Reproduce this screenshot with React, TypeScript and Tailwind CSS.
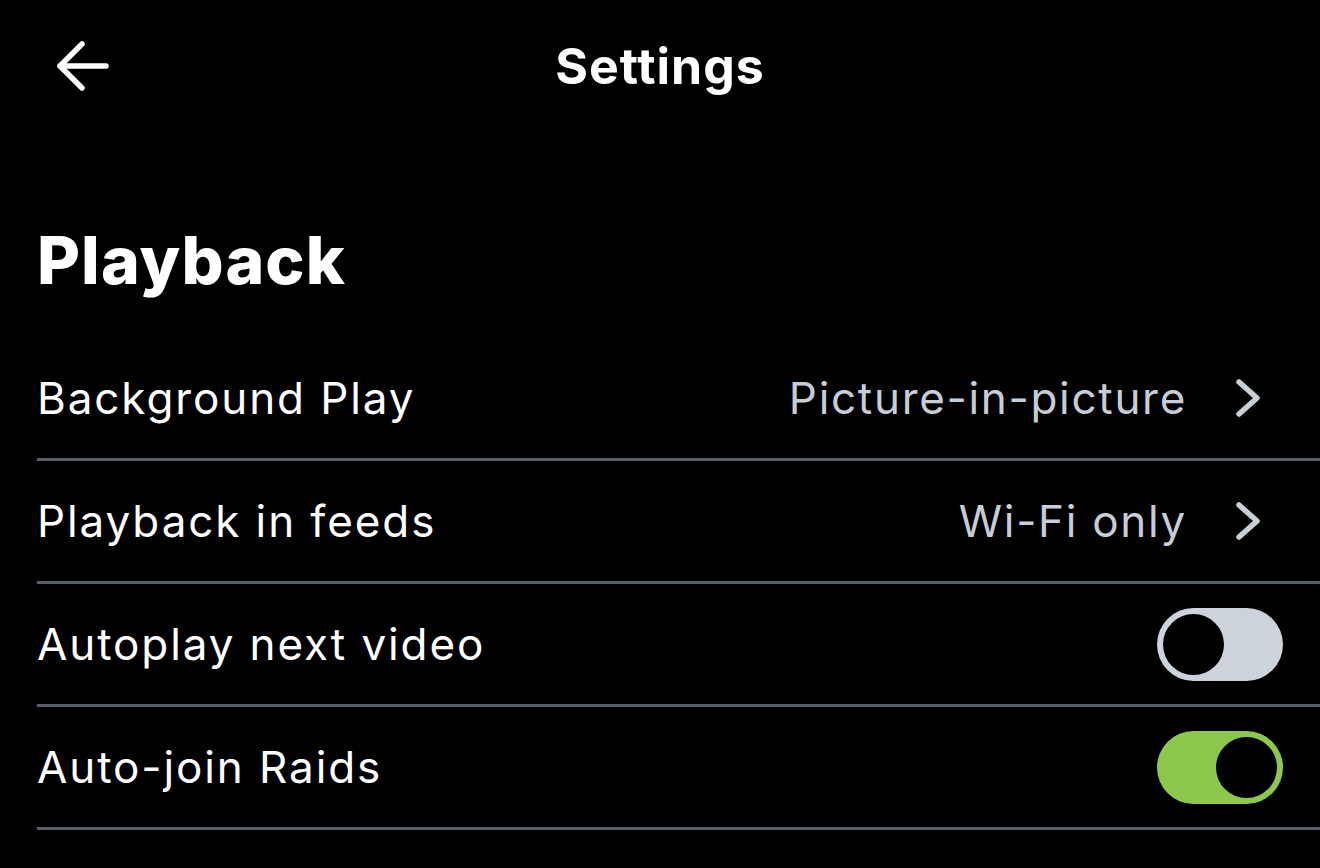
export default function App() {
  const rows = [
    { label: "Background Play", value: "Picture-in-picture", kind: "link" },
    { label: "Playback in feeds", value: "Wi-Fi only", kind: "link" },
    { label: "Autoplay next video", on: false, kind: "toggle" },
    { label: "Auto-join Raids", on: true, kind: "toggle" },
  ];

  return (
    <div className="w-full h-[868px] bg-black text-white font-['Inter','Noto_Sans',sans-serif] overflow-hidden">
      {/* Header */}
      <div className="relative h-[132px] flex items-center justify-center">
        <button className="absolute left-[55px] top-[39px] w-[56px] h-[54px] flex items-center justify-center">
          <svg width="56" height="54" viewBox="0 0 56 54" fill="none" stroke="white" strokeWidth="5.5" strokeLinecap="round" strokeLinejoin="round">
            <path d="M5 27H51" />
            <path d="M27 5L5 27L27 49" />
          </svg>
        </button>
        <h1 className="text-[50px] leading-none font-bold tracking-[1px]">Settings</h1>
      </div>

      {/* Section */}
      <h2 className="pl-[37px] mt-[95px] mb-[45px] text-[66px] leading-none font-extrabold tracking-[1.1px]">
        Playback
      </h2>

      <div className="ml-[37px]">
        {rows.map((row, i) => (
          <div
            key={i}
            className="h-[123px] flex items-center justify-between border-b-[3px] border-[#5a5e66] pr-[37px]"
          >
            <span className="text-[44px] leading-none tracking-[1.9px]">{row.label}</span>
            {row.kind === "link" ? (
              <div className="flex items-center">
                <span className="text-[44px] leading-none text-[#c6cdd6] tracking-[1.7px]">{row.value}</span>
                <svg className="ml-[46px] mr-[20px]" width="30" height="42" viewBox="0 0 30 42" fill="none" stroke="#c9cfd7" strokeWidth="5.5" strokeLinecap="round" strokeLinejoin="round">
                  <path d="M6 5L24 21L6 37" />
                </svg>
              </div>
            ) : (
              <div
                className={
                  "w-[126px] h-[73px] rounded-full p-[6px] flex " +
                  (row.on ? "bg-[#8bc84b] justify-end" : "bg-[#cdd3da] justify-start")
                }
              >
                <div className="w-[61px] h-[61px] rounded-full bg-black" />
              </div>
            )}
          </div>
        ))}
      </div>
    </div>
  );
}
